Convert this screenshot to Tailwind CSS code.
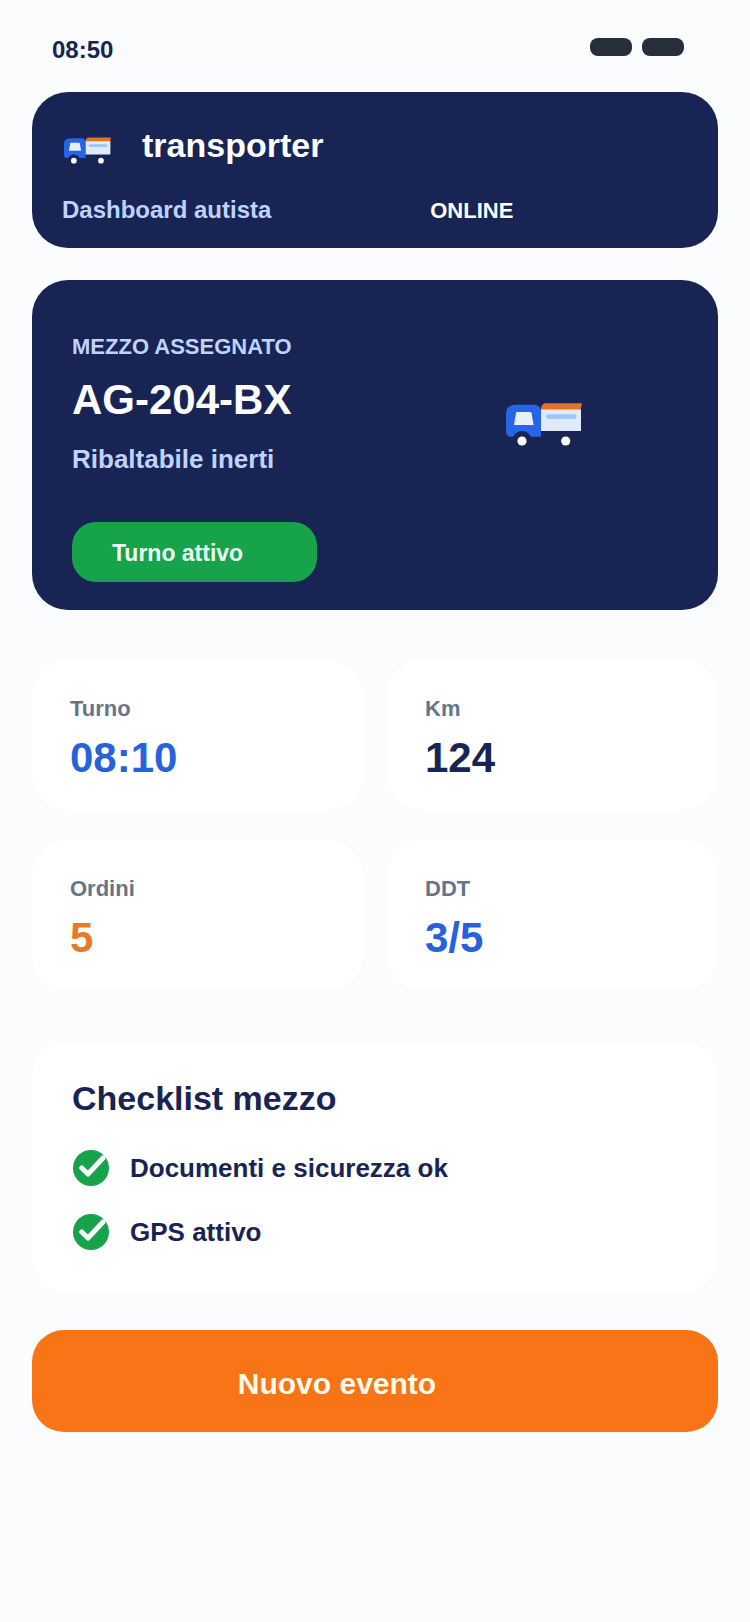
<!DOCTYPE html>
<html lang="it">
<head>
    <meta charset="UTF-8">
    <meta name="viewport" content="width=device-width, initial-scale=1.0">
    <title>Transporter - Dashboard autista</title>
    <script src="https://cdn.jsdelivr.net/npm/@tailwindcss/browser@4"></script>
</head>
<body class="font-['Liberation_Sans',Arial,sans-serif] font-bold bg-[#fafcfd] text-[#182554] min-h-screen">

    <!-- Barra di stato -->
    <div class="flex items-start justify-between pt-[34px] pb-[26px] pl-[52px] pr-[66px]">
        <time class="text-2xl leading-8">08:50</time>
        <div class="flex gap-2.5 mt-1">
            <span class="w-[42px] h-[18px] rounded-lg bg-[#272e3c]"></span>
            <span class="w-[42px] h-[18px] rounded-lg bg-[#272e3c]"></span>
        </div>
    </div>

    <!-- Camion, usato due volte -->
    <svg class="hidden" aria-hidden="true">
        <symbol id="camion" viewBox="0 0 76 43">
            <path d="M10 1.7H28Q35 2 35 8V33.7H4Q0 33 0 28V11Q0 2 10 1.7Z" fill="#2864e8"/>
            <path d="M11 9H24.5Q25.3 9 25.5 10L27.7 22H8L10 10Q10.2 9 11 9Z" fill="#e6f0fe"/>
            <path d="M35 6H75V28H35Z" fill="#dfebfb"/>
            <path d="M35 6.6V5Q36 .3 40 .3H76L74.6 6.6Z" fill="#e27422"/>
            <rect x="40" y="11.3" width="30.5" height="4.7" rx="2" fill="#a0c6f9"/>
            <circle cx="16" cy="38" r="10" fill="#182554"/>
            <circle cx="16" cy="38" r="4.6" fill="#fff"/>
            <circle cx="59.7" cy="38" r="4.6" fill="#fff"/>
        </symbol>
    </svg>

    <main class="px-8">
        <header class="bg-[#182554] rounded-[36px] px-[30px] pt-8 pb-[22px]">
            <div class="flex items-end gap-[31px]">
                <svg class="w-[47px] h-[27px] ml-0.5 mb-0.5" aria-hidden="true"><use href="#camion"/></svg>
                <h1 class="text-[34px] leading-[42px] text-white">transporter</h1>
            </div>
            <div class="grid grid-cols-[10fr_7fr] items-baseline mt-7">
                <p class="text-2xl leading-8 text-[#bfd3fe]">Dashboard autista</p>
                <p class="text-[22px] leading-7 text-white">ONLINE</p>
            </div>
        </header>

        <!-- Mezzo assegnato -->
        <section class="bg-[#182554] rounded-[36px] mt-8 pt-[53px] pb-7 pl-10 pr-[136px]">
            <div class="flex items-start justify-between">
                <div>
                    <p class="text-[22px] leading-7 text-[#bfd3fe]">MEZZO ASSEGNATO</p>
                    <h2 class="text-[42px] leading-12 mt-[15px] text-white">AG-204-BX</h2>
                    <p class="text-[26px] leading-8 mt-[19px] text-[#bfd3fe]">Ribaltabile inerti</p>
                </div>
                <svg class="w-[76px] h-[43px] mt-[70px]" aria-hidden="true"><use href="#camion"/></svg>
            </div>
            <p class="w-[245px] mt-[47px] pl-10 pt-[15px] pb-[13px] rounded-3xl bg-[#17a34a] text-[23px] leading-8 text-[#ecfdf5]">Turno attivo</p>
        </section>

        <!-- Riepilogo del turno -->
        <dl class="grid grid-cols-2 gap-x-6 gap-y-[30px] mt-[50px]">
            <div class="bg-white rounded-[36px] px-[38px] pt-[35px] pb-7">
                <dt class="text-[22px] leading-7 text-[#667489]">Turno</dt>
                <dd class="text-[42px] leading-12 mt-[11px] text-[#2861dc]">08:10</dd>
            </div>
            <div class="bg-white rounded-[36px] px-[38px] pt-[35px] pb-7">
                <dt class="text-[22px] leading-7 text-[#667489]">Km</dt>
                <dd class="text-[42px] leading-12 mt-[11px]">124</dd>
            </div>
            <div class="bg-white rounded-[36px] px-[38px] pt-[35px] pb-7">
                <dt class="text-[22px] leading-7 text-[#667489]">Ordini</dt>
                <dd class="text-[42px] leading-12 mt-[11px] text-[#e87a26]">5</dd>
            </div>
            <div class="bg-white rounded-[36px] px-[38px] pt-[35px] pb-7">
                <dt class="text-[22px] leading-7 text-[#667489]">DDT</dt>
                <dd class="text-[42px] leading-12 mt-[11px] text-[#2861dc]">3/5</dd>
            </div>
        </dl>

        <!-- Checklist -->
        <section class="bg-white rounded-[36px] mt-[52px] px-10 pt-[35px] pb-[42px]">
            <h2 class="text-[34px] leading-[42px]">Checklist mezzo</h2>
            <ul class="flex flex-col gap-7 mt-[31px] pl-px text-[26px] leading-9">
                <li class="flex gap-[21px]">
                    <svg class="size-9" viewBox="0 0 36 36" fill="none" aria-hidden="true">
                        <circle cx="18" cy="18" r="18" fill="#17a34a"/>
                        <path d="M8.7 18 15 24 30 8" stroke="#fff" stroke-width="5" stroke-linecap="round" stroke-linejoin="round"/>
                    </svg>
                    Documenti e sicurezza ok
                </li>
                <li class="flex gap-[21px]">
                    <svg class="size-9" viewBox="0 0 36 36" fill="none" aria-hidden="true">
                        <circle cx="18" cy="18" r="18" fill="#17a34a"/>
                        <path d="M8.7 18 15 24 30 8" stroke="#fff" stroke-width="5" stroke-linecap="round" stroke-linejoin="round"/>
                    </svg>
                    GPS attivo
                </li>
            </ul>
        </section>

        <button type="button" class="block w-full mt-[38px] mb-10 pl-[30%] pt-[34px] pb-7 rounded-[32px] bg-[#f87416] hover:bg-[#ea580c] text-left text-[30px] leading-10 text-[#fffbeb]">Nuovo evento</button>
    </main>

</body>
</html>
